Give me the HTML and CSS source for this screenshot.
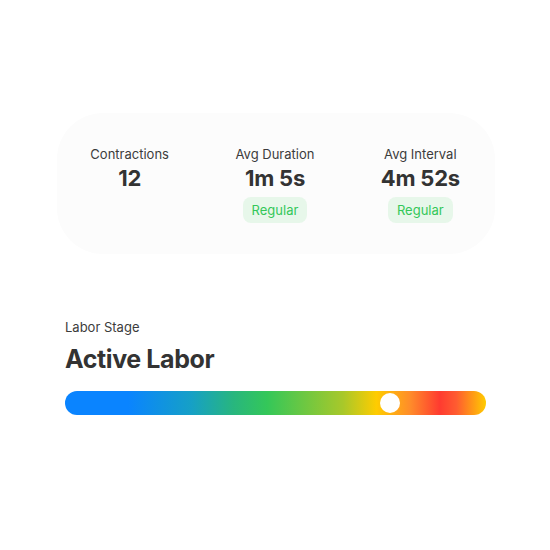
FILE: index.html
```html
<!DOCTYPE html>
<html>
<head>
<meta charset="utf-8">
<link rel="stylesheet" href="styles.css">
</head>
<body>
<div class="page">
  <div class="card">
    <div class="stat">
      <div class="label">Contractions</div>
      <div class="value">12</div>
    </div>
    <div class="stat">
      <div class="label">Avg Duration</div>
      <div class="value">1m 5s</div>
      <div class="badge">Regular</div>
    </div>
    <div class="stat">
      <div class="label">Avg Interval</div>
      <div class="value">4m 52s</div>
      <div class="badge">Regular</div>
    </div>
  </div>
  <div class="stage">
    <div class="stage-label">Labor Stage</div>
    <div class="stage-title">Active Labor</div>
    <div class="bar">
      <div class="thumb" style="left: 77.2%"></div>
    </div>
  </div>
</div>
</body>
</html>
```
FILE: styles.css
```css
html, body {
  margin: 0;
  padding: 0;
  background: #ffffff;
}
body {
  font-family: Inter, "Liberation Sans", sans-serif;
  color: #333333;
  width: 550px;
  height: 550px;
}
.page {
  padding: 113px 55px 0 57px;
}
.card {
  width: 438px;
  height: 141px;
  box-sizing: border-box;
  background: #fcfcfc;
  border-radius: 46px;
  display: grid;
  grid-template-columns: 1fr 1fr 1fr;
  padding: 32px 2px 0 0;
}
.stat {
  display: flex;
  flex-direction: column;
  align-items: center;
}
.label {
  font-size: 13px;
  line-height: 18px;
  color: #3c3c3c;
}
.value {
  font-size: 22px;
  font-weight: 700;
  line-height: 26px;
  color: #333333;
  margin-top: 2px;
  letter-spacing: -0.2px;
}
.badge {
  margin-top: 6px;
  background: #e7f7ea;
  color: #34c759;
  font-size: 13px;
  line-height: 26px;
  height: 26px;
  padding: 0 9px;
  border-radius: 8px;
}
.stage {
  padding: 64px 0 0 8px;
  width: 421px;
}
.stage-label {
  font-size: 13px;
  line-height: 18px;
  color: #3c3c3c;
}
.stage-title {
  font-size: 25px;
  font-weight: 700;
  line-height: 32px;
  margin-top: 7px;
  color: #333333;
  letter-spacing: -0.4px;
}
.bar {
  position: relative;
  margin-top: 16px;
  height: 24px;
  border-radius: 12px;
  background: linear-gradient(90deg,
    #0a84ff 0%,
    #0a84ff 15%,
    #16a0c6 30%,
    #28b67e 40%,
    #34c759 48%,
    #a8c82a 66%,
    #ffcc00 74%,
    #ff8c2a 82%,
    #ff3b30 89%,
    #ff5c30 93%,
    #ffcc00 100%);
}
.thumb {
  position: absolute;
  top: 2px;
  width: 20px;
  height: 20px;
  margin-left: -10px;
  border-radius: 50%;
  background: #ffffff;
}
```
